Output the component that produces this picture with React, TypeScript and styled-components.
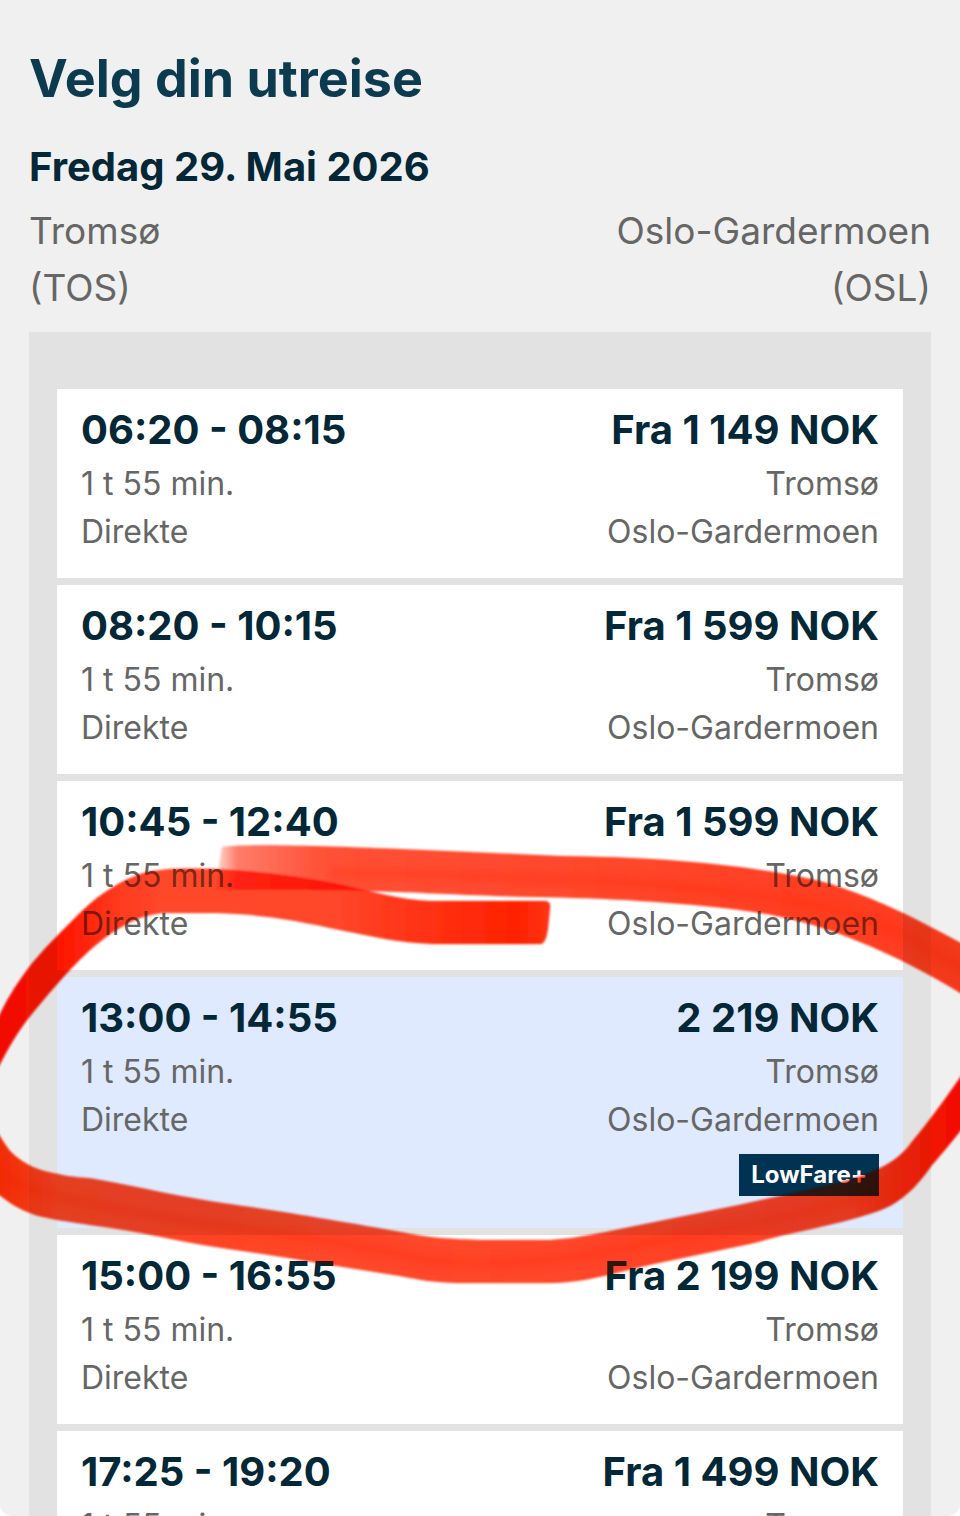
import React, { useState } from "react";
import styled, { createGlobalStyle } from "styled-components";

const GlobalStyle = createGlobalStyle`
  * { box-sizing: border-box; }
  body { margin: 0; background: #ffffff; }
`;

const Screen = styled.div`
  height: 100vh;
  overflow-x: hidden;
  overflow-y: auto;
  scrollbar-width: none;
  border-radius: 0 0 12px 12px;
  background: #f0f0f0;
  color: #022737;
  font-family: Inter, "Liberation Sans", sans-serif;
`;

const Page = styled.main`
  position: relative;
  padding: 44px 29px 0;
`;

const Title = styled.h1`
  margin: 0;
  font-size: 52px;
  line-height: 70px;
  font-weight: 700;
  color: #0c3b50;
`;

const TravelDate = styled.h2`
  margin: 25px 0 7px;
  font-size: 40px;
  line-height: 56px;
  font-weight: 700;
`;

const Route = styled.div`
  display: flex;
  justify-content: space-between;
  margin-bottom: 16px;
  font-size: 37px;
  line-height: 57px;
  color: #666666;
`;

const Airport = styled.div<{ $end?: boolean }>`
  display: flex;
  flex-direction: column;
  text-align: ${(p) => (p.$end ? "right" : "left")};
`;

const Panel = styled.ul`
  display: flex;
  flex-direction: column;
  gap: 7px;
  margin: 0;
  padding: 57px 28px;
  list-style: none;
  background: #e2e2e2;
`;

const FlightCard = styled.button<{ $selected: boolean }>`
  display: flex;
  justify-content: space-between;
  width: 100%;
  padding: 13px 24px 22px;
  border: 0;
  background: ${(p) => (p.$selected ? "#dfe9ff" : "#ffffff")};
  color: inherit;
  font-family: inherit;
  cursor: pointer;
`;

const Column = styled.span<{ $end?: boolean }>`
  display: flex;
  flex-direction: column;
  align-items: ${(p) => (p.$end ? "flex-end" : "flex-start")};
`;

const Headline = styled.span`
  margin-bottom: 2px;
  font-size: 40px;
  line-height: 56px;
  font-weight: 700;
  white-space: nowrap;
`;

const Detail = styled.span`
  font-size: 32px;
  line-height: 48px;
  color: #666666;
`;

const Badge = styled.span`
  margin: 10px 0;
  padding: 0 12px;
  background: #003352;
  color: #ffffff;
  font-size: 24px;
  line-height: 42px;
  font-weight: 700;
`;

const Marker = styled.svg<{ $tint?: boolean }>`
  position: absolute;
  top: 0;
  left: 0;
  width: 100%;
  height: 1516px;
  overflow: hidden;
  pointer-events: none;
  mix-blend-mode: ${(p) => (p.$tint ? "normal" : "multiply")};
  opacity: ${(p) => (p.$tint ? 0.18 : 1)};
`;

type Flight = { time: string; price: string; badge?: string };

const flights: Flight[] = [
  { time: "06:20 - 08:15", price: "Fra 1 149 NOK" },
  { time: "08:20 - 10:15", price: "Fra 1 599 NOK" },
  { time: "10:45 - 12:40", price: "Fra 1 599 NOK" },
  { time: "13:00 - 14:55", price: "2 219 NOK", badge: "LowFare+" },
  { time: "15:00 - 16:55", price: "Fra 2 199 NOK" },
  { time: "17:25 - 19:20", price: "Fra 1 499 NOK" },
];

function HandDrawnCircle() {
  return (
    <>
      <Marker viewBox="0 0 960 1516" preserveAspectRatio="none" aria-hidden="true">
        <defs>
          <linearGradient id="topBand" gradientUnits="userSpaceOnUse" x1="215" y1="0" x2="960" y2="0">
            <stop offset="0" stopColor="#ff7a66" stopOpacity="0.2" />
            <stop offset="0.03" stopColor="#ff6a54" stopOpacity="0.85" />
            <stop offset="0.14" stopColor="#ff5238" />
            <stop offset="0.5" stopColor="#ff482c" />
            <stop offset="1" stopColor="#ff3c1e" />
          </linearGradient>
          <linearGradient id="tailBand" gradientUnits="userSpaceOnUse" x1="0" y1="0" x2="550" y2="0">
            <stop offset="0" stopColor="#ff0c00" />
            <stop offset="0.12" stopColor="#ff1a02" />
            <stop offset="0.22" stopColor="#ff3c20" />
            <stop offset="0.3" stopColor="#ff482c" />
            <stop offset="0.6" stopColor="#ff482c" />
            <stop offset="0.76" stopColor="#ff3416" />
            <stop offset="0.94" stopColor="#ff2300" />
            <stop offset="1" stopColor="#ff3416" />
          </linearGradient>
          <linearGradient id="bottomBand" gradientUnits="userSpaceOnUse" x1="0" y1="0" x2="960" y2="0">
            <stop offset="0" stopColor="#ff3005" />
            <stop offset="0.06" stopColor="#ff4424" />
            <stop offset="0.5" stopColor="#ff482c" />
            <stop offset="0.88" stopColor="#ff4024" />
            <stop offset="0.95" stopColor="#ff2408" />
            <stop offset="1" stopColor="#ff0a00" />
          </linearGradient>
          <filter id="feather" filterUnits="userSpaceOnUse" x="-20" y="820" width="1000" height="490">
            <feGaussianBlur stdDeviation="1.2" />
          </filter>
          <filter id="soften" filterUnits="userSpaceOnUse" x="-20" y="820" width="1000" height="490">
            <feGaussianBlur stdDeviation="4" />
          </filter>
        </defs>
        <g id="ring">
          <g filter="url(#feather)">
            <path
              fill="url(#topBand)"
              d="M222 847C240 844 300 845 400 849L560 856C640 857 700 861 760 870C800 876 825 881 845 889C880 901 920 920 975 951V1002C935 977 900 958 860 942C820 925 780 915 740 910C680 902 600 898 540 897C480 896 430 893 400 892C350 890 280 890 215 890Z"
            />
            <path
              fill="url(#tailBand)"
              style={{ mixBlendMode: "multiply" }}
              d="M-8 1032C4 1003 14 988 27 970C42 950 62 931 83 910C100 894 120 881 140 874C160 868 185 868 217 869C260 871 300 876 340 884C375 892 400 900 430 901H546Q551 902 550 908L548 928Q546 944 540 944H433C400 943 370 936 340 930C300 921 260 914 217 913H165C140 914 115 928 90 950C65 973 45 998 27 1020C12 1040 2 1060 -8 1080Z"
            />
            <path
              fill="url(#bottomBand)"
              d="M-10 1115C-5 1130 2 1140 10 1151C25 1166 40 1171 58 1174C72 1178 86 1177 100 1180C140 1187 180 1197 222 1203C280 1211 350 1223 400 1232C430 1238 450 1239 480 1240H545C572 1240 610 1231 650 1223L739 1205L793 1193C830 1186 860 1178 880 1168C893 1162 901 1155 908 1147C930 1120 945 1100 975 1056V1112C955 1138 945 1150 932 1165C920 1182 908 1196 890 1206C870 1216 830 1225 793 1233C770 1238 757 1243 740 1246L668 1261C625 1269 590 1283 550 1283H460C435 1283 415 1279 400 1276C340 1267 280 1256 222 1248C180 1242 140 1231 90 1225C70 1222 50 1219 35 1215C18 1209 5 1201 -10 1187Z"
            />
          </g>
          <g fill="none" stroke="#ff2000" strokeWidth="12" opacity="0.22" filter="url(#soften)">
            <path d="M330 873C420 873 520 878 620 882C700 887 780 898 840 910C885 922 920 944 970 972" />
            <path d="M-6 1166C10 1188 60 1200 180 1220C270 1230 350 1244 430 1260C490 1268 560 1262 660 1241C740 1225 830 1210 890 1188" />
          </g>
        </g>
      </Marker>
      <Marker $tint viewBox="0 0 960 1516" preserveAspectRatio="none" aria-hidden="true">
        <use href="#ring" />
      </Marker>
    </>
  );
}

export default function App() {
  const [selected, setSelected] = useState(3);
  return (
    <>
      <GlobalStyle />
      <Screen>
        <Page>
          <Title>Velg din utreise</Title>
          <TravelDate>Fredag 29. Mai 2026</TravelDate>
          <Route>
            <Airport>
              <span>Tromsø</span>
              <span>(TOS)</span>
            </Airport>
            <Airport $end>
              <span>Oslo-Gardermoen</span>
              <span>(OSL)</span>
            </Airport>
          </Route>
          <Panel>
            {flights.map((flight, index) => (
              <li key={flight.time}>
                <FlightCard
                  type="button"
                  $selected={selected === index}
                  aria-pressed={selected === index}
                  onClick={() => setSelected(index)}
                >
                  <Column>
                    <Headline>{flight.time}</Headline>
                    <Detail>1 t 55 min.</Detail>
                    <Detail>Direkte</Detail>
                  </Column>
                  <Column $end>
                    <Headline>{flight.price}</Headline>
                    <Detail>Tromsø</Detail>
                    <Detail>Oslo-Gardermoen</Detail>
                    {flight.badge && <Badge>{flight.badge}</Badge>}
                  </Column>
                </FlightCard>
              </li>
            ))}
          </Panel>
          <HandDrawnCircle />
        </Page>
      </Screen>
    </>
  );
}
